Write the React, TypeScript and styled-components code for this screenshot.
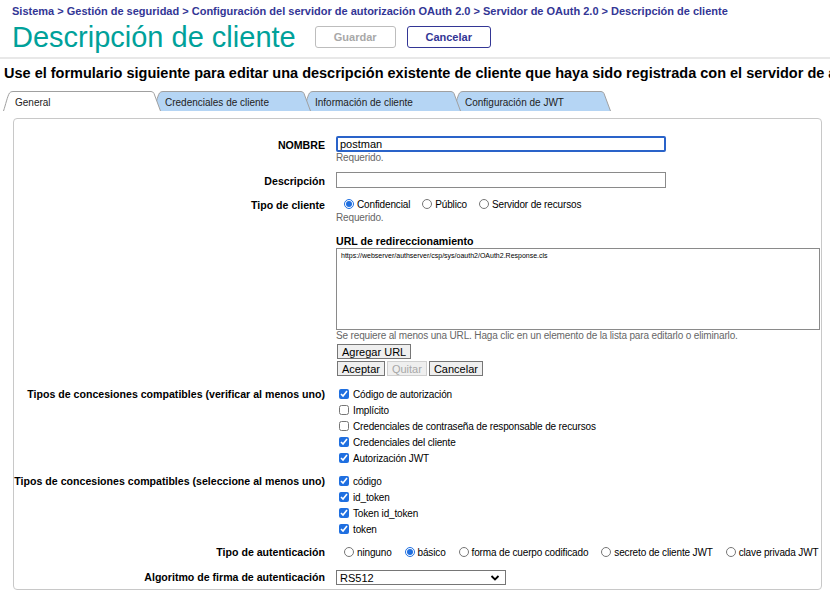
import React from 'react';
import styled, { createGlobalStyle } from 'styled-components';

const GlobalStyle = createGlobalStyle`
  body {
    margin: 0;
    background: #fff;
    font-family: "Liberation Sans", Arial, sans-serif;
    color: #000;
  }
`;

const NAVY = '#333695';
const TEAL = '#00a19a';

const tabs = ['General', 'Credenciales de cliente', 'Información de cliente', 'Configuración de JWT'];

const grants = [
    { label: 'Código de autorización', checked: true },
    { label: 'Implícito', checked: false },
    { label: 'Credenciales de contraseña de responsable de recursos', checked: false },
    { label: 'Credenciales del cliente', checked: true },
    { label: 'Autorización JWT', checked: true },
];

const responseTypes = ['código', 'id_token', 'Token id_token', 'token'];

const authTypes = [
    { label: 'ninguno', checked: false },
    { label: 'básico', checked: true },
    { label: 'forma de cuerpo codificado', checked: false },
    { label: 'secreto de cliente JWT', checked: false },
    { label: 'clave privada JWT', checked: false },
];

const App = () => {
    return (
        <Page>
            <GlobalStyle />
            <Header>
                <Breadcrumb>
                    Sistema &gt; Gestión de seguridad &gt; Configuración del servidor de autorización OAuth 2.0 &gt; Servidor de OAuth 2.0 &gt; Descripción de cliente
                </Breadcrumb>
                <TitleRow>
                    <Title>Descripción de cliente</Title>
                    <HeaderButton disabled $width={81}>Guardar</HeaderButton>
                    <HeaderButton $width={84}>Cancelar</HeaderButton>
                </TitleRow>
            </Header>
            <Intro>
                Use el formulario siguiente para editar una descripción existente de cliente que haya sido registrada con el servidor de autorización
            </Intro>
            <TabStrip>
                {tabs.map((t, i) => (
                    <Tab key={t} $z={i === 0 ? 10 : 5 - i}>
                        <TabShape viewBox="0 0 158 20" preserveAspectRatio="none">
                            <path
                                d="M0.5 20 C2.5 14 4.5 5 6.5 2 Q7.5 0.5 10 0.5 L148 0.5 Q150 0.5 151 2.5 L157.5 20"
                                fill={i === 0 ? '#fff' : '#b5d5f4'}
                                stroke="#a0a0a0"
                                strokeWidth="1"
                            />
                        </TabShape>
                        <TabLabel>{t}</TabLabel>
                    </Tab>
                ))}
            </TabStrip>
            <Panel>
                <Row $mt={0}>
                    <Label $top={3}>NOMBRE</Label>
                    <Field>
                        <TextInput $focused defaultValue="postman" />
                        <Hint>Requerido.</Hint>
                    </Field>
                </Row>

                <Row $mt={8}>
                    <Label $top={3}>Descripción</Label>
                    <Field>
                        <TextInput />
                    </Field>
                </Row>

                <Row $mt={8}>
                    <Label $top={3}>Tipo de cliente</Label>
                    <Field>
                        <OptionRow $gap={12}>
                            <Option><Radio name="ct" defaultChecked />Confidencial</Option>
                            <Option><Radio name="ct" />Público</Option>
                            <Option><Radio name="ct" />Servidor de recursos</Option>
                        </OptionRow>
                        <Hint>Requerido.</Hint>
                    </Field>
                </Row>

                <Row $mt={8}>
                    <span />
                    <Field>
                        <SubLabel>URL de redireccionamiento</SubLabel>
                        <UrlList>https://webserver/authserver/csp/sys/oauth2/OAuth2.Response.cls</UrlList>
                        <Hint>Se requiere al menos una URL. Haga clic en un elemento de la lista para editarlo o eliminarlo.</Hint>
                        <ButtonRow>
                            <PlainButton>Agregar URL</PlainButton>
                        </ButtonRow>
                        <ButtonRow>
                            <PlainButton>Aceptar</PlainButton>
                            <PlainButton disabled>Quitar</PlainButton>
                            <PlainButton>Cancelar</PlainButton>
                        </ButtonRow>
                    </Field>
                </Row>

                <Row $mt={10}>
                    <Label $top={2}>Tipos de concesiones compatibles (verificar al menos uno)</Label>
                    <CheckList>
                        {grants.map((g) => (
                            <Option key={g.label}>
                                <Check defaultChecked={g.checked} />
                                {g.label}
                            </Option>
                        ))}
                    </CheckList>
                </Row>

                <Row $mt={7}>
                    <Label $top={2}>Tipos de concesiones compatibles (seleccione al menos uno)</Label>
                    <CheckList>
                        {responseTypes.map((r) => (
                            <Option key={r}>
                                <Check defaultChecked />
                                {r}
                            </Option>
                        ))}
                    </CheckList>
                </Row>

                <Row $mt={7}>
                    <Label $top={2}>Tipo de autenticación</Label>
                    <Field>
                        <OptionRow $gap={13}>
                            {authTypes.map((a) => (
                                <Option key={a.label}>
                                    <Radio name="auth" defaultChecked={a.checked} />
                                    {a.label}
                                </Option>
                            ))}
                        </OptionRow>
                    </Field>
                </Row>

                <Row $mt={10}>
                    <Label $top={1}>Algoritmo de firma de autenticación</Label>
                    <Field>
                        <SelectBox>
                            <Select defaultValue="RS512">
                                <option>RS256</option>
                                <option>RS384</option>
                                <option>RS512</option>
                            </Select>
                            <Chevron viewBox="0 0 10 8">
                                <path d="M1.5 2 L5 5.5 L8.5 2" fill="none" stroke="#000" strokeWidth="1.8" />
                            </Chevron>
                        </SelectBox>
                    </Field>
                </Row>
            </Panel>
        </Page>
    );
};

export default App;

const Page = styled.div`
    width: 830px;
    overflow: hidden;
`;

const Header = styled.header`
    padding: 4px 12px 0;
    border-bottom: 2px solid #e8e8e8;
    height: 53px;
`;

const Breadcrumb = styled.div`
    font-size: 11px;
    line-height: 15px;
    font-weight: bold;
    color: ${NAVY};
    white-space: nowrap;
`;

const TitleRow = styled.div`
    display: flex;
    align-items: center;
    margin-top: 3px;
`;

const Title = styled.h1`
    margin: 0 19px 0 0;
    font-size: 29px;
    line-height: 30px;
    font-weight: normal;
    color: ${TEAL};
    white-space: nowrap;
`;

const HeaderButton = styled.button<{ $width: number }>`
    width: ${(p) => p.$width}px;
    height: 22px;
    margin-right: 11px;
    padding: 0;
    background: #fff;
    border: 1px solid ${(p) => (p.disabled ? '#bdbdbd' : NAVY)};
    border-radius: 3px;
    font-family: inherit;
    font-size: 11px;
    font-weight: bold;
    color: ${(p) => (p.disabled ? '#a8a8a8' : NAVY)};
`;

const Intro = styled.p`
    margin: 6px 0 0 4px;
    font-size: 14.5px;
    line-height: 16px;
    font-weight: bold;
    white-space: nowrap;
    overflow: hidden;
`;

const TabStrip = styled.div`
    display: flex;
    margin: 10px 0 0 3px;
    height: 20px;
`;

const Tab = styled.div<{ $z: number }>`
    position: relative;
    width: 158px;
    height: 20px;
    margin-left: -8px;
    z-index: ${(p) => p.$z};
    &:first-child {
        margin-left: 0;
    }
`;

const TabShape = styled.svg`
    position: absolute;
    inset: 0;
    width: 100%;
    height: 100%;
`;

const TabLabel = styled.span`
    position: relative;
    display: block;
    padding: 6px 0 0 12px;
    font-size: 10px;
    color: #222;
`;

const Panel = styled.section`
    margin: 7px 8px 0 13px;
    padding: 17px 0 4px;
    border: 1px solid #c8c8c8;
    border-radius: 4px;
    font-size: 10px;
`;

const Row = styled.div<{ $mt: number }>`
    display: grid;
    grid-template-columns: 311px 1fr;
    column-gap: 11px;
    margin-top: ${(p) => p.$mt}px;
`;

const Label = styled.div<{ $top: number }>`
    padding-top: ${(p) => p.$top}px;
    text-align: right;
    font-size: 10.6px;
    font-weight: bold;
    white-space: nowrap;
`;

const Field = styled.div`
    display: flex;
    flex-direction: column;
    align-items: flex-start;
    letter-spacing: -0.15px;
`;

const TextInput = styled.input<{ $focused?: boolean }>`
    box-sizing: border-box;
    width: 330px;
    height: 16px;
    padding: 0 2px;
    border: ${(p) => (p.$focused ? '2px solid #2a63c9' : '1px solid #8a8a8a')};
    border-radius: ${(p) => (p.$focused ? '2px' : '0')};
    font-family: "Liberation Sans", Arial, sans-serif;
    font-size: 11px;
    letter-spacing: 0;
    outline: none;
`;

const Hint = styled.div`
    font-size: 10px;
    line-height: 12px;
    color: #666;
    white-space: nowrap;
`;

const OptionRow = styled.div<{ $gap: number }>`
    display: flex;
    gap: ${(p) => p.$gap}px;
    padding-left: 8px;
    height: 16px;
    align-items: center;
`;

const CheckList = styled.div`
    display: flex;
    flex-direction: column;
    padding-left: 3px;
    letter-spacing: -0.15px;
`;

const Option = styled.label`
    display: flex;
    align-items: center;
    height: 16px;
    white-space: nowrap;
`;

const Radio = styled.input.attrs({ type: 'radio' })`
    width: 10px;
    height: 10px;
    margin: 0 3px 0 0;
    accent-color: #1f6fe0;
`;

const Check = styled.input.attrs({ type: 'checkbox' })`
    width: 10px;
    height: 10px;
    margin: 0 4px 0 0;
    accent-color: #1f6fe0;
`;

const SubLabel = styled.div`
    margin: 3px 0 1px;
    font-weight: bold;
    font-size: 10.6px;
    line-height: 12px;
    letter-spacing: 0;
`;

const UrlList = styled.div`
    box-sizing: border-box;
    width: 484px;
    height: 82px;
    padding: 3px 4px;
    border: 1px solid #8a8a8a;
    font-size: 7px;
    letter-spacing: 0;
`;

const ButtonRow = styled.div`
    display: flex;
    gap: 2px;
    margin-top: 2px;
    padding-left: 1px;
`;

const PlainButton = styled.button`
    height: 15px;
    padding: 0 4px;
    background: #efefef;
    border: 1px solid #767676;
    border-radius: 0;
    font-family: "Liberation Sans", Arial, sans-serif;
    font-size: 11px;
    line-height: 12px;
    color: ${(p) => (p.disabled ? '#a8a8a8' : '#000')};
    border-color: ${(p) => (p.disabled ? '#cfcfcf' : '#767676')};
`;

const SelectBox = styled.div`
    position: relative;
    width: 170px;
    height: 15px;
`;

const Select = styled.select`
    appearance: none;
    box-sizing: border-box;
    width: 100%;
    height: 100%;
    padding: 0 3px;
    border: 1px solid #767676;
    border-radius: 0;
    background: #fff;
    font-family: "Liberation Sans", Arial, sans-serif;
    font-size: 11px;
`;

const Chevron = styled.svg`
    position: absolute;
    right: 6px;
    top: 4px;
    width: 10px;
    height: 8px;
    pointer-events: none;
`;
